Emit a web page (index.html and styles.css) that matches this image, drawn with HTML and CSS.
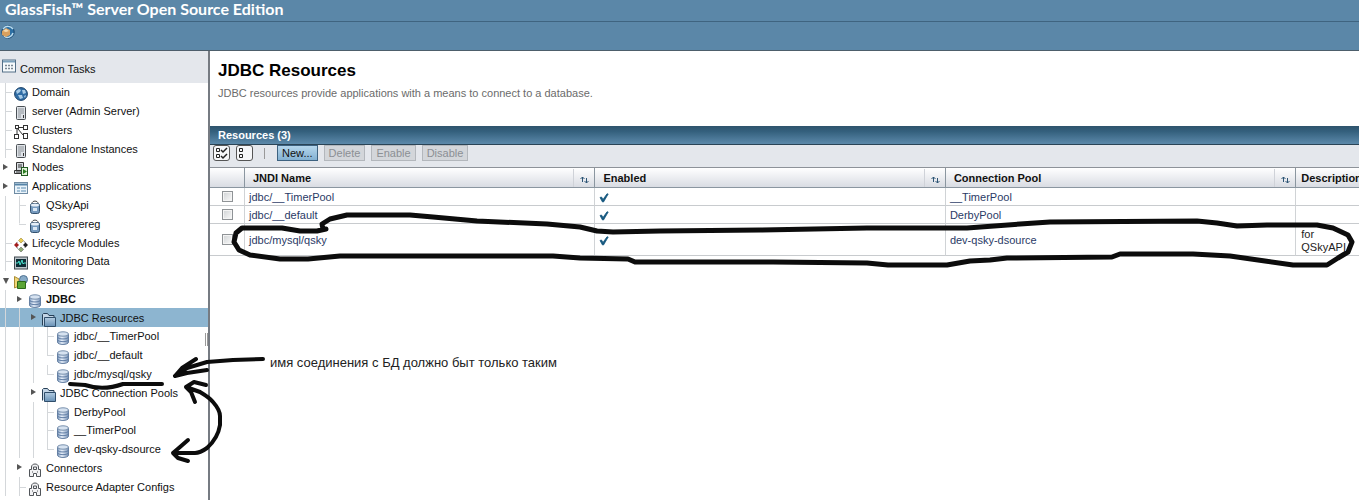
FILE: index.html
```html
<!DOCTYPE html>
<html lang="en">
<head>
<meta charset="utf-8">
<title>JDBC Resources</title>
<link rel="stylesheet" href="styles.css">
</head>
<body>
<svg class="defs" aria-hidden="true">
  <linearGradient id="steel" x1="0" x2="1"><stop offset="0" stop-color="#7f9cc0"/><stop offset=".4" stop-color="#e8f0fa"/><stop offset="1" stop-color="#7590b5"/></linearGradient>
  <linearGradient id="fold" x1="0" y1="0" x2="0" y2="1"><stop offset="0" stop-color="#b4cde2"/><stop offset="1" stop-color="#6790b5"/></linearGradient>
  <symbol id="i-globe" viewBox="0 0 14 14"><circle cx="7" cy="7" r="6.4" fill="#2f6ca5" stroke="#1d4268"/><path d="M2 4l3-2 2 1-1 2-3 2zM8 3l3 0 1 3-3 1zM4 8l4 0 1 3-3 1zM10 9l2-1-1 3z" fill="#a9cbe6"/></symbol>
  <symbol id="i-server" viewBox="0 0 14 14"><rect x="2.5" y=".5" width="9" height="13" rx="1" fill="#dfe3e8" stroke="#4b5055"/><path d="M4 3h6M4 5h6M4 7h6M4 9h3M4 11h3" stroke="#8c9298"/><path d="M9 9h1v3H9z" fill="#333"/></symbol>
  <symbol id="i-cluster" viewBox="0 0 14 14"><g fill="#fff" stroke="#333"><rect x="1.500" y=".5" width="3" height="3"/><rect x="9.500" y=".5" width="4" height="4"/><rect x=".5" y="9.500" width="4" height="4"/><rect x="9.500" y="8.500" width="4" height="5"/><path d="M5 2.500h4M3 4v5M4 4l5 6" fill="none"/></g></symbol>
  <symbol id="i-node" viewBox="0 0 14 14"><path d="M2.500.5h7v8h-7zM.5 8.500h8v3h-8z" fill="#d8dde2" stroke="#333"/><path d="M4 3h4M4 5h4M2 10h5" stroke="#333"/><rect x="7.500" y="5.500" width="6" height="8" fill="#e4f4dc" stroke="#225c22"/><path d="M9 7l4 2.500-4 2.500z" fill="#2a7d22"/></symbol>
  <symbol id="i-apps" viewBox="0 0 14 14"><rect x=".5" y="1.500" width="13" height="11" fill="#eaf3fa" stroke="#6f8ba3"/><path d="M1 3.500h12" stroke="#5684a8" stroke-width="2"/><path d="M3 7h3M7 7h5M3 10h3M7 10h5" stroke="#a3c0d6" stroke-width="2"/></symbol>
  <symbol id="i-app" viewBox="0 0 14 14"><path d="M4 3.500C4 .3 10 .3 10 3.500" fill="none" stroke="#444"/><rect x="2.500" y="3.500" width="9" height="10" rx="2" fill="#7599bd" stroke="#34526f"/><ellipse cx="7" cy="5" rx="4" ry="1.500" fill="#e7eff7"/><path d="M5 8h4v3H5z" fill="#dbe8f4"/></symbol>
  <symbol id="i-life" viewBox="0 0 14 14"><circle cx="7" cy="7" r="4.800" fill="none" stroke="#777" stroke-dasharray="3 2"/><path d="M4.500 2.500L7 0l2.500 2.500L7 5z" fill="#e9cd55" stroke="#8c7420" stroke-width=".5"/><path d="M0 7l2.500-2.500L5 7 2.500 9.500z" fill="#a21c1c"/><path d="M9 7l2.500-2.500L14 7l-2.500 2.500z" fill="#222"/><path d="M4.500 11.500L7 9l2.500 2.500L7 14z" fill="#8fae74" stroke="#555" stroke-width=".5"/></symbol>
  <symbol id="i-monitor" viewBox="0 0 14 14"><rect x=".5" y="1" width="13" height="12" fill="#bcc5cb" stroke="#40494f"/><rect x="2" y="3" width="10" height="8" fill="#0c2b33"/><path d="M2 7h2l1-2 1 4 2-5 1 4 1-1h2" fill="none" stroke="#48e0cc"/></symbol>
  <symbol id="i-res" viewBox="0 0 14 14"><path d="M.5 1.500L5 4v7l-4.500 2z" fill="#f1d677" stroke="#a98c34"/><circle cx="9.500" cy="4.500" r="4" fill="#88abc8" stroke="#4e7191"/><path d="M3.500 6.500h8v7h-8z" fill="#5ba536" stroke="#2c691a"/></symbol>
  <symbol id="i-db" viewBox="0 0 14 14"><path d="M1.500 3v8c0 3.300 11 3.300 11 0V3" fill="url(#steel)" stroke="#6781a3"/><ellipse cx="7" cy="3" rx="5.500" ry="2.200" fill="#d6e2f0" stroke="#7890ad"/><path d="M1.500 6c0 2.600 11 2.600 11 0M1.500 8.700c0 2.600 11 2.600 11 0" fill="none" stroke="#627fa6"/></symbol>
  <symbol id="i-folder" viewBox="0 0 14 14"><path d="M.5 12.500v-11l1-1h4l1.500 2h5v2" fill="#c3d5e6" stroke="#273f56"/><path d="M2.500 4.500h11v9h-11z" fill="url(#fold)" stroke="#304e6b"/></symbol>
  <symbol id="i-conn" viewBox="0 0 14 14"><path d="M1.500 13.500v-7h2V4C3.500 0 10.500 0 10.500 4v2.500h2v7h-4v-3h-3v3z" fill="#f2f2f4" stroke="#505459"/><path d="M5.500 6.500V4h3v2.500zM4 9h1M9 9h1" fill="none" stroke="#505459"/></symbol>
  <symbol id="i-tasks" viewBox="0 0 14 14"><rect x=".5" y="1" width="13" height="12" fill="#f6fafc" stroke="#547088"/><path d="M1 2.500h12" stroke="#7ba0bb" stroke-width="2"/><path d="M3 6.500h8M3 9.500h8" stroke="#7a8792" stroke-width="1.500" stroke-dasharray="2 1"/></symbol>
  <symbol id="i-sort" viewBox="0 0 9 8"><path d="M2.500 6V1M.5 3l2-2 2 2M6.500 2v5M4.500 5l2 2 2-2" fill="none" stroke="#2c5475"/></symbol>
  <symbol id="i-check" viewBox="0 0 10 10"><path d="M1 4.500L2.500 4 4 6.500 8 .8 9.200 1 4.500 9H3.500z" fill="#15587f" stroke="#15587f" stroke-width=".8"/></symbol>
</svg>

<header class="masthead">
  <div class="brand">GlassFish™ Server Open Source Edition</div>
  <div class="tools">
    <svg class="icon" viewBox="0 0 14 14"><circle cx="7" cy="7" r="6.200" fill="#2d6fa3" stroke="#1c4870"/><path d="M2 4c3-4 8-3 10 0M3 11c3 3 8 1 9-3" fill="none" stroke="#b9dcef" stroke-width="1.500"/><path d="M1 6l4-3 4 2v5l-4 2-4-2z" fill="#d9a05e"/><path d="M2 6l3-2 3 2-3 1z" fill="#f6dcb1"/></svg>
  </div>
</header>

<div class="body">
  <nav class="side" aria-label="Common Tasks">
    <div class="side-head"><svg class="icon"><use href="#i-tasks"/></svg><span>Common Tasks</span></div>
    <ul class="tree">
      <li><i class="tee"></i><svg class="icon"><use href="#i-globe"/></svg><a href="#">Domain</a></li>
      <li><i class="tee"></i><svg class="icon"><use href="#i-server"/></svg><a href="#">server (Admin Server)</a></li>
      <li><i class="tee"></i><svg class="icon"><use href="#i-cluster"/></svg><a href="#">Clusters</a></li>
      <li><i class="tee"></i><svg class="icon"><use href="#i-server"/></svg><a href="#">Standalone Instances</a></li>
      <li><i class="closed"></i><svg class="icon"><use href="#i-node"/></svg><a href="#">Nodes</a></li>
      <li><i class="closed"></i><svg class="icon"><use href="#i-apps"/></svg><a href="#">Applications</a></li>
      <li><i class="bar"></i><i class="tee"></i><svg class="icon"><use href="#i-app"/></svg><a href="#">QSkyApi</a></li>
      <li><i class="bar"></i><i class="elbow"></i><svg class="icon"><use href="#i-app"/></svg><a href="#">qsysprereg</a></li>
      <li><i class="tee"></i><svg class="icon"><use href="#i-life"/></svg><a href="#">Lifecycle Modules</a></li>
      <li><i class="tee"></i><svg class="icon"><use href="#i-monitor"/></svg><a href="#">Monitoring Data</a></li>
      <li><i class="open"></i><svg class="icon"><use href="#i-res"/></svg><a href="#">Resources</a></li>
      <li><i class="bar"></i><i class="closed"></i><svg class="icon"><use href="#i-db"/></svg><a href="#" class="strong">JDBC</a></li>
      <li class="selected"><i class="bar"></i><i class="bar"></i><i class="closed"></i><svg class="icon"><use href="#i-folder"/></svg><a href="#">JDBC Resources</a></li>
      <li><i class="bar"></i><i class="bar"></i><i class="bar"></i><i class="tee"></i><svg class="icon"><use href="#i-db"/></svg><a href="#">jdbc/__TimerPool</a></li>
      <li><i class="bar"></i><i class="bar"></i><i class="bar"></i><i class="elbow"></i><svg class="icon"><use href="#i-db"/></svg><a href="#">jdbc/__default</a></li>
      <li><i class="bar"></i><i class="bar"></i><i class="bar"></i><i class="elbow"></i><svg class="icon"><use href="#i-db"/></svg><a href="#">jdbc/mysql/qsky</a></li>
      <li><i class="bar"></i><i class="bar"></i><i class="closed"></i><svg class="icon"><use href="#i-folder"/></svg><a href="#">JDBC Connection Pools</a></li>
      <li><i class="bar"></i><i class="bar"></i><i class="bar"></i><i class="tee"></i><svg class="icon"><use href="#i-db"/></svg><a href="#">DerbyPool</a></li>
      <li><i class="bar"></i><i class="bar"></i><i class="bar"></i><i class="tee"></i><svg class="icon"><use href="#i-db"/></svg><a href="#">__TimerPool</a></li>
      <li><i class="bar"></i><i class="bar"></i><i class="bar"></i><i class="elbow"></i><svg class="icon"><use href="#i-db"/></svg><a href="#">dev-qsky-dsource</a></li>
      <li><i class="bar"></i><i class="closed"></i><svg class="icon"><use href="#i-conn"/></svg><a href="#">Connectors</a></li>
      <li><i class="bar"></i><i class="tee"></i><svg class="icon"><use href="#i-conn"/></svg><a href="#">Resource Adapter Configs</a></li>
    </ul>
    <div class="grip"></div>
  </nav>

  <main class="content">
    <div class="intro">
      <h1>JDBC Resources</h1>
      <p>JDBC resources provide applications with a means to connect to a database.</p>
    </div>
    <h2>Resources (3)</h2>
    <div class="actions">
      <button class="pick" aria-label="Select all"><svg viewBox="0 0 15 14"><path d="M2.500 2.500h3v3h-3zM2.500 8.500h3v3h-3z" fill="none" stroke="#222"/><path d="M7 4l2 2 4-4M7 10l2 2 4-4" fill="none" stroke="#222" stroke-width="1.500"/></svg></button>
      <button class="pick" aria-label="Deselect all"><svg viewBox="0 0 15 14"><path d="M2.500 2.500h3v3h-3zM2.500 8.500h3v3h-3z" fill="none" stroke="#222"/></svg></button>
      <span class="divider"></span>
      <button class="btn primary">New...</button>
      <button class="btn" disabled>Delete</button>
      <button class="btn" disabled>Enable</button>
      <button class="btn" disabled>Disable</button>
    </div>
    <table>
      <colgroup><col class="c-check"><col class="c-wide"><col class="c-wide"><col class="c-wide"><col></colgroup>
      <thead>
        <tr>
          <th></th>
          <th><div class="th"><span>JNDI Name</span><a href="#" class="sort" aria-label="Sort by name"><svg><use href="#i-sort"/></svg></a></div></th>
          <th><div class="th"><span>Enabled</span><a href="#" class="sort" aria-label="Sort by enabled"><svg><use href="#i-sort"/></svg></a></div></th>
          <th><div class="th"><span>Connection Pool</span><a href="#" class="sort" aria-label="Sort by pool"><svg><use href="#i-sort"/></svg></a></div></th>
          <th class="desc">Description</th>
        </tr>
      </thead>
      <tbody>
        <tr><td class="check"><input type="checkbox" aria-label="Select jdbc/__TimerPool"></td><td><a href="#">jdbc/__TimerPool</a></td><td><svg class="tick"><use href="#i-check"/></svg></td><td><a href="#">__TimerPool</a></td><td></td></tr>
        <tr><td class="check"><input type="checkbox" aria-label="Select jdbc/__default"></td><td><a href="#">jdbc/__default</a></td><td><svg class="tick"><use href="#i-check"/></svg></td><td><a href="#">DerbyPool</a></td><td></td></tr>
        <tr><td class="check"><input type="checkbox" aria-label="Select jdbc/mysql/qsky"></td><td><a href="#">jdbc/mysql/qsky</a></td><td><svg class="tick"><use href="#i-check"/></svg></td><td><a href="#">dev-qsky-dsource</a></td><td class="desc">for QSkyAPI</td></tr>
      </tbody>
    </table>
  </main>
</div>

<p class="note">имя соединения с БД должно быт только таким</p>
<svg class="ink" width="1359" height="500" viewBox="0 0 1359 500" aria-hidden="true">
  <path class="lasso" d="M326 229L317 231 300 231 282 228 242 228 236 233 234 242 239 250 250 255 280 259 308 259 340 256 553 256 580 258 628 259 635 262 773 262 867 263 888 265 947 265 970 261 990 260 1007 258 1112 257 1120 254 1193 254 1230 256 1265 261 1293 265 1327 265 1338 258 1348 252 1352 242 1348 235 1333 228 1317 225 1267 225 1237 226 1217 223 1197 221 1050 222 1020 224 967 228 867 228 760 230 660 231 613 232 597 231 580 227 547 224 477 221 433 217 410 215 347 215 330 219 322 224 323 229"/>
  <path d="M263 359L233 360 207 362 187 368 175 376M196 359L182 368 175 376 187 373 207 370"/>
  <path d="M70 384L85 385Q103 391 123 384L162 384"/>
  <path d="M186 387L200 392Q210 398 213 402Q220 410 220 416V425Q218 438 207 448Q200 453 195 453L173 453M206 385L194 382 186 387 191 392 195 402M188 440L180 447 173 453 178 458 188 461"/>
</svg>
</body>
</html>
```
FILE: styles.css
```css
* { box-sizing: border-box; }
body {
  margin: 0;
  min-height: 100vh;
  display: flex;
  flex-direction: column;
  position: relative;
  overflow: hidden;
  background: #fff;
  color: #111;
  font: 11px/18px "Liberation Sans", Arial, sans-serif;
}
a { color: inherit; text-decoration: none; }
.defs { position: absolute; width: 0; height: 0; }
.icon { width: 14px; height: 14px; flex: none; display: block; }

.masthead { background: #5b87a8; border-bottom: 1px solid #4d5e6b; }
.brand {
  height: 22px;
  padding-left: 5px;
  border-bottom: 1px solid #3f6480;
  color: #fff;
  font: bold 16px/18px Lato, sans-serif;
}
.tools { height: 28px; padding: 3px 1px; }

.body { flex: 1; display: flex; }
.side {
  position: relative;
  flex: none;
  width: 210px;
  display: flex;
  flex-direction: column;
  border-right: 2px solid #767b82;
}
.side-head {
  display: flex;
  gap: 4px;
  height: 32px;
  padding: 8px 2px;
  background: #e4e7ec;
}
.side-head span { padding: 1px 0; }
.tree {
  flex: 1;
  display: grid;
  grid-auto-rows: 1fr;
  margin: 0;
  padding: 0 0 4px;
  list-style: none;
}
.tree li { display: flex; align-items: center; white-space: nowrap; }
.tree li > a { margin-left: 4px; }
.tree .icon { margin-top: 4px; }
.tree .selected { background: #8db5d0; }
.tree i { position: relative; flex: none; width: 14px; align-self: stretch; }
.tree .bar, .tree .tee { background: linear-gradient(#d4d7da, #d4d7da) 5px 0 / 1px 100% no-repeat; }
.tree .elbow { background: linear-gradient(#d4d7da, #d4d7da) 5px 0 / 1px 50% no-repeat; }
.tree .tee::after, .tree .elbow::after {
  content: "";
  position: absolute;
  left: 5px;
  top: 50%;
  width: 7px;
  border-top: 1px solid #d4d7da;
}
.tree .closed::after, .tree .open::after {
  content: "";
  position: absolute;
  left: 3px;
  top: 6px;
  border: 3px solid transparent;
}
.tree .closed::after { border-left: 5px solid #555; border-right: 0; }
.tree .open::after { top: 7px; border-top: 6px solid #555; border-bottom: 0; }
.tree .strong { font-weight: bold; }
.grip {
  position: absolute;
  right: 0;
  top: 282px;
  width: 3px;
  height: 13px;
  border: solid #999;
  border-width: 0 1px;
  background: #fff;
}

.content { flex: 1; min-width: 0; overflow: hidden; }
.intro { padding: 10px 8px 24px; }
h1 { margin: 0; font-size: 17px; line-height: 20px; color: #000; }
.intro p { margin: 3px 0 0; color: #6b6b6b; }
h2 {
  margin: 0;
  padding-left: 8px;
  font-size: 11px;
  line-height: 18px;
  color: #fff;
  background: linear-gradient(#2e536c, #34607d 30%, #5c89aa);
  border-bottom: 1px solid #2a4456;
}
.actions {
  display: flex;
  gap: 6px;
  align-items: flex-start;
  height: 23px;
  padding: 0 3px;
  background: #e4e7ec;
  border-bottom: 1px solid #8d9299;
}
.pick {
  width: 17px;
  height: 16px;
  padding: 0;
  border: 1px solid #555;
  border-radius: 3px;
  background: #f6f7f9;
}
.pick svg { display: block; width: 15px; height: 14px; }
.divider { width: 1px; height: 11px; margin: 3px 6px 0 5px; background: #999; }
.btn {
  height: 16px;
  padding: 0 4px;
  border: 1px solid #b3b7bc;
  background: #d3d6da;
  color: #8b8f94;
  font: 11px/14px "Liberation Sans", Arial, sans-serif;
}
.primary { border-color: #3d6280; background: linear-gradient(#b5d6ec, #83b1d2); color: #111; }

table { width: 100%; table-layout: fixed; border-collapse: separate; border-spacing: 0; }
.c-check { width: 35px; }
.c-wide { width: 30.5%; }
th {
  height: 20px;
  padding: 1px 0 0;
  text-align: left;
  line-height: 18px;
  white-space: nowrap;
  border-right: 1px solid #8b96a0;
  border-bottom: 1px solid #8b96a0;
  background: linear-gradient(#fff, #d9dce3);
}
.th { display: flex; justify-content: space-between; padding-left: 8px; }
.sort { width: 21px; padding: 7px 6px 0; border-left: 1px solid #cfd2d8; line-height: 0; }
.sort svg { width: 9px; height: 8px; }
td {
  height: 18px;
  padding: 2px 4px 0;
  line-height: 13px;
  color: #2a3a66;
  border-right: 1px solid #d0d3d6;
  border-bottom: 1px solid #c8cbce;
}
th:last-child, td:last-child { border-right: 0; }
th.desc { padding-left: 5px; }
td.desc { padding: 4px 5px 1px; color: #222; }
td.check { padding: 0; text-align: center; line-height: 0; }
td input {
  appearance: none;
  width: 11px;
  height: 11px;
  margin: 0;
  border: 1px solid #8f9396;
  background: linear-gradient(135deg, #cfd2d4, #fafafa);
  box-shadow: inset 0 0 0 1px #f4f4f4;
}
.tick { display: block; width: 10px; height: 10px; }

.note {
  position: absolute;
  left: 270px;
  top: 354px;
  margin: 0;
  font-size: 13px;
  line-height: 18px;
  color: #222;
  white-space: nowrap;
}
.ink { position: absolute; left: 0; top: 0; pointer-events: none; }
.ink path {
  fill: none;
  stroke: #0c0c0c;
  stroke-width: 4;
  stroke-linecap: round;
  stroke-linejoin: round;
}
.ink .lasso { stroke-width: 5; }
```
